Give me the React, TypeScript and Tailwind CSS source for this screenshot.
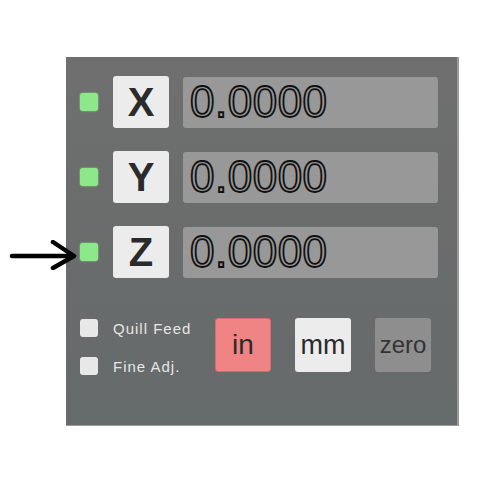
import React from "react";

const axes = ["X", "Y", "Z"];

function AxisRow({ label }: { label: string }) {
  return (
    <div className="flex items-center h-[52px]">
      <div className="w-[18px] h-[18px] rounded-[3px] bg-[#8ce889] shadow-[0_0_2px_#8ce889]" />
      <div className="ml-[15px] w-[56px] h-[52px] rounded-[3px] bg-[#ececec] flex items-center justify-center text-[40px] font-bold text-[#2b2b2b] leading-none">
        {label}
      </div>
      <div className="ml-[14px] w-[255px] h-[51px] rounded-[3px] bg-[#989898] flex items-center pl-[7px]">
        <span className="text-[44px] leading-none text-transparent [-webkit-text-stroke:1.8px_#111] tracking-[0.5px]">
          0.0000
        </span>
      </div>
    </div>
  );
}

export default function App() {
  return (
    <div className="relative w-[500px] h-[500px] bg-white font-['Liberation_Sans',Arial,sans-serif]">
      <div className="absolute left-[9px] top-[240px] w-[70px] h-[30px]">
        <svg width="70" height="30" viewBox="0 0 70 30">
          <line x1="3" y1="16" x2="64" y2="16" stroke="#000" strokeWidth="4.5" strokeLinecap="round" />
          <polyline points="44,2 65,16 44,28" fill="none" stroke="#000" strokeWidth="4.5" strokeLinecap="round" strokeLinejoin="round" />
        </svg>
      </div>

      <div className="ml-[66px] pt-[57px]">
        <div className="w-[393px] h-[369px] bg-gradient-to-b from-[#6f6f6f] to-[#656a6a] border-r-2 border-b border-[#9a9a9a] pl-[14px] pt-[19px]">
          <div className="flex flex-col gap-[23px]">
            {axes.map((a) => (
              <AxisRow key={a} label={a} />
            ))}
          </div>

          <div className="flex mt-[40px]">
            <div className="flex flex-col gap-[20px] pt-[1px] w-[121px]">
              <div className="flex items-center gap-[15px]">
                <div className="w-[18px] h-[18px] rounded-[3px] bg-[#e8e8e8]" />
                <span className="text-[15px] tracking-[1px] text-[#e6e6e6] leading-none">Quill Feed</span>
              </div>
              <div className="flex items-center gap-[15px]">
                <div className="w-[18px] h-[18px] rounded-[3px] bg-[#e8e8e8]" />
                <span className="text-[15px] tracking-[1px] text-[#e6e6e6] leading-none">Fine Adj.</span>
              </div>
            </div>

            <div className="flex gap-[24px] ml-[14px]">
              <div className="w-[56px] h-[54px] rounded-[3px] bg-[#f08383] border border-[#d86b6b] flex items-center justify-center text-[28px] text-[#2a2a2a] leading-none">
                in
              </div>
              <div className="w-[56px] h-[54px] rounded-[3px] bg-[#ececec] flex items-center justify-center text-[27px] text-[#2a2a2a] leading-none">
                mm
              </div>
              <div className="w-[56px] h-[54px] rounded-[3px] bg-[#8e8e8e] flex items-center justify-center text-[24px] text-[#333] leading-none">
                zero
              </div>
            </div>
          </div>
        </div>
      </div>
    </div>
  );
}
